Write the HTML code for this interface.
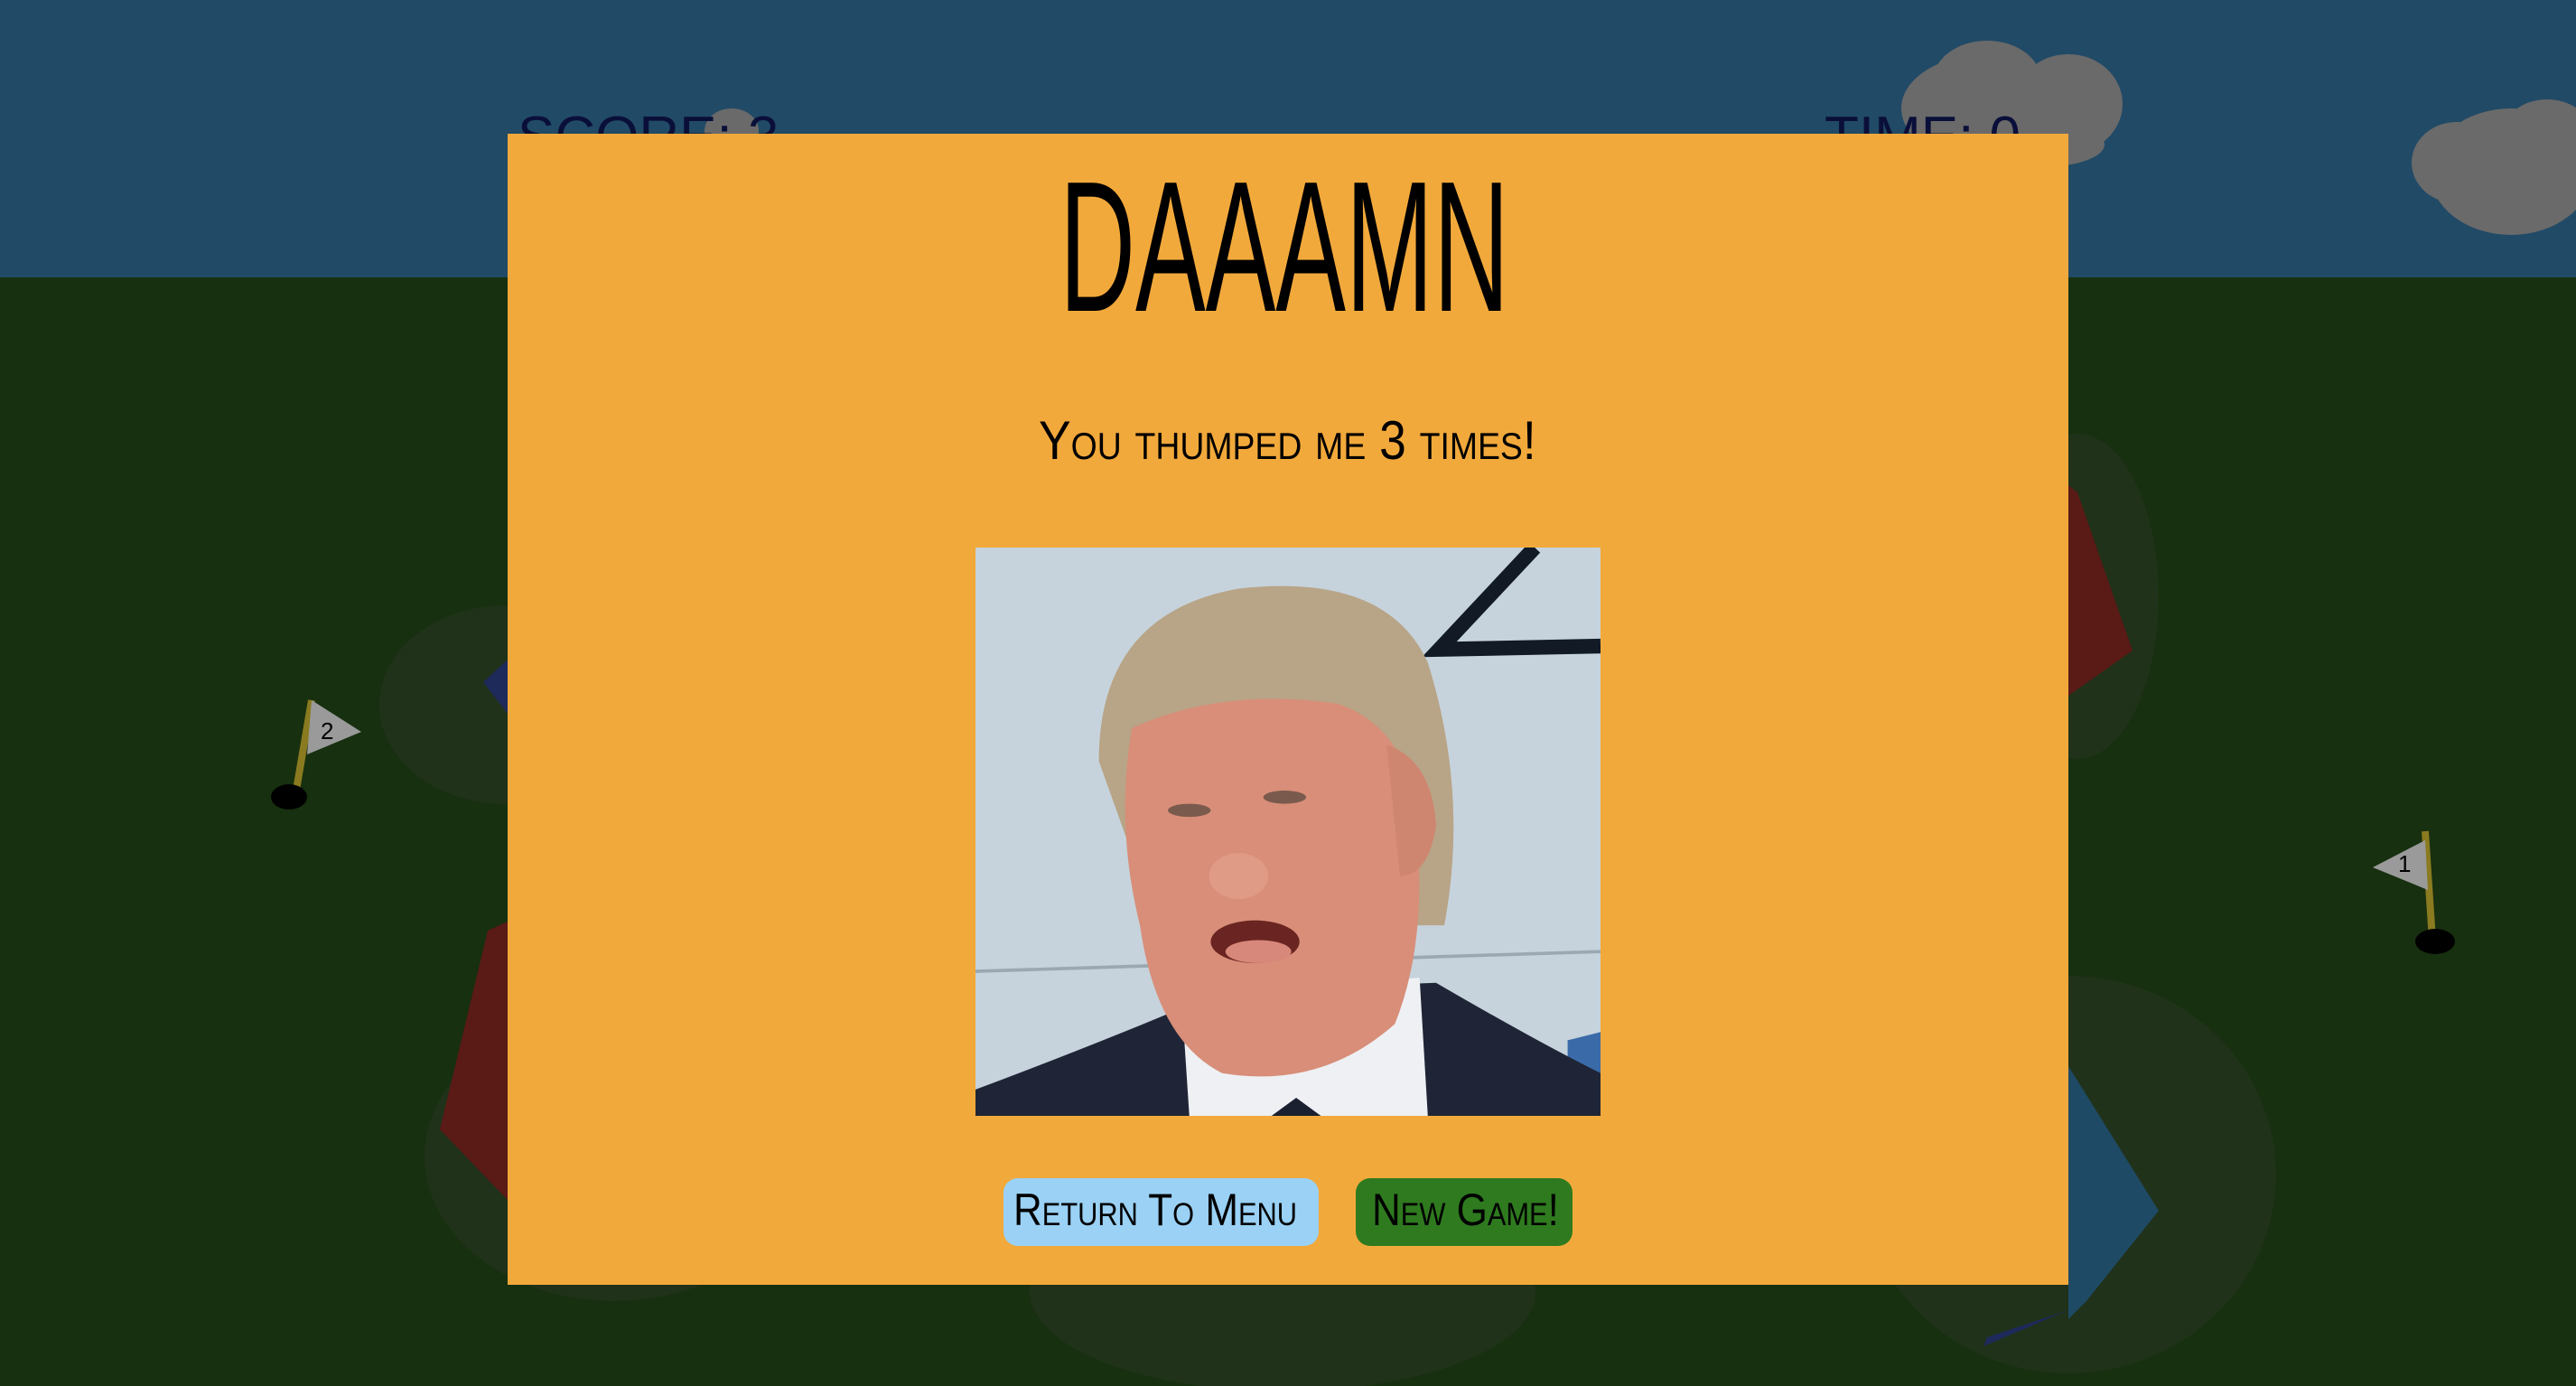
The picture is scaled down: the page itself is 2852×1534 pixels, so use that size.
<!DOCTYPE html>
<html><head><meta charset="utf-8"><style>
*{margin:0;padding:0;box-sizing:border-box}
html,body{width:2852px;height:1534px;overflow:hidden;background:#17300f;font-family:"Liberation Sans",sans-serif}
.abs{position:absolute}
.t{position:absolute;white-space:nowrap;transform-origin:0 0;color:#000}
</style></head><body>
<div class="abs" style="left:0;top:0;width:2852px;height:307px;background:#214a66"></div>
<svg class="abs" style="left:0;top:0" width="2852" height="1534">
 <g fill="#6a6a6a">
  <ellipse cx="2200" cy="120" rx="95" ry="60"/><ellipse cx="2200" cy="90" rx="60" ry="45"/><ellipse cx="2290" cy="115" rx="60" ry="55"/><ellipse cx="2260" cy="160" rx="70" ry="25"/>
  <ellipse cx="2780" cy="190" rx="90" ry="70"/><ellipse cx="2720" cy="180" rx="50" ry="45"/><ellipse cx="2820" cy="150" rx="50" ry="40"/>
  <ellipse cx="810" cy="145" rx="30" ry="25"/>
 </g>
 <g fill="#203219">
  <ellipse cx="560" cy="780" rx="140" ry="110"/>
  <ellipse cx="2300" cy="660" rx="90" ry="180"/>
  <ellipse cx="680" cy="1280" rx="210" ry="160"/>
  <ellipse cx="2290" cy="1300" rx="230" ry="220"/>
  <ellipse cx="1420" cy="1430" rx="280" ry="110"/>
 </g>
 <polygon points="562,1020 540,1030 487,1250 562,1328" fill="#5a1a16"/>
 <polygon points="2290,537 2300,545 2361,720 2290,770" fill="#5a1a16"/>
 <polygon points="2290,1180 2390,1340 2310,1440 2290,1460" fill="#1f4a66"/>
 <polygon points="2290,1450 2200,1480 2196,1490" fill="#1e2a5a"/>
 <polygon points="562,730 535,755 562,790" fill="#1e2a5a"/>
 <g><line x1="345" y1="775" x2="325" y2="892" stroke="#8a7a20" stroke-width="8"/>
  <polygon points="345,775 400,810 340,835" fill="#9a9a9a"/><ellipse cx="320" cy="882" rx="20" ry="14" fill="#000"/>
  <text x="355" y="818" font-size="26" font-family="Liberation Sans">2</text></g>
 <g><line x1="2685" y1="920" x2="2693" y2="1040" stroke="#8a7a20" stroke-width="8"/>
  <polygon points="2685,930 2627,960 2688,985" fill="#9a9a9a"/><ellipse cx="2696" cy="1042" rx="22" ry="14" fill="#000"/>
  <text x="2655" y="965" font-size="26" font-family="Liberation Sans">1</text></g>
 <text x="573" y="172" font-size="62" fill="#0a0f3a" font-family="Liberation Sans">SCORE: 3</text>
 <text x="2020" y="172" font-size="62" fill="#0a0f3a" font-family="Liberation Sans">TIME: 0</text>
</svg>
<div class="abs" style="left:562px;top:148px;width:1728px;height:1274px;background:#f2a93b"></div>
<div class="t" style="left:1173px;top:170px;font-size:206px;line-height:1;transform:scaleX(0.565)">DAAAMN</div>
<div class="t" style="left:1150px;top:458px;font-size:60px;line-height:1;font-variant:small-caps;transform:scaleX(0.89)">You thumped me 3 times!</div>
<svg class="abs" style="left:1080px;top:606px" width="692" height="629" viewBox="0 0 380 346" preserveAspectRatio="none">
 <rect width="380" height="346" fill="#c6d3dc"/>
 <line x1="0" y1="258" x2="380" y2="246" stroke="#9aa8b2" stroke-width="2"/>
 <polygon points="360,300 380,295 380,346 360,346" fill="#3b6aa8"/>
 <path d="M340 0 L282 62 L380 60" fill="none" stroke="#111a25" stroke-width="9"/>
 <path d="M0 330 Q80 300 150 270 L280 265 Q340 300 380 320 L380 346 L0 346Z" fill="#1f2536"/>
 <path d="M125 270 L270 262 L275 346 L130 346Z" fill="#eef0f4"/>
 <polygon points="180,346 195,335 210,346" fill="#1a2030"/>
 <path d="M75 130 Q75 40 160 25 Q250 15 275 70 Q300 150 285 230 L255 230 L100 200 Z" fill="#b8a487"/>
 <path d="M95 110 Q150 85 220 95 Q265 110 268 170 Q275 240 255 290 Q210 330 150 320 Q110 300 100 230 Q85 170 95 110Z" fill="#d88e78"/>
 <path d="M250 120 Q278 130 280 170 Q275 200 258 200Z" fill="#cf8670"/>
 <ellipse cx="170" cy="240" rx="27" ry="13" fill="#6a2522"/>
 <ellipse cx="172" cy="246" rx="20" ry="7" fill="#d7887a"/>
 <ellipse cx="130" cy="160" rx="13" ry="4" fill="#7a5a4c"/>
 <ellipse cx="188" cy="152" rx="13" ry="4" fill="#7a5a4c"/>
 <ellipse cx="160" cy="200" rx="18" ry="14" fill="#e09b86"/>
</svg>
<div class="abs" style="left:1111px;top:1304px;width:349px;height:75px;background:#9ad1f5;border-radius:16px"></div>
<div class="t" style="left:1122px;top:1312px;font-size:50px;line-height:1.1;font-variant:small-caps;transform:scaleX(0.88)">Return To Menu</div>
<div class="abs" style="left:1501px;top:1304px;width:240px;height:75px;background:#2f7a1f;border-radius:16px"></div>
<div class="t" style="left:1519px;top:1312px;font-size:50px;line-height:1.1;font-variant:small-caps;transform:scaleX(0.88)">New Game!</div>
</body></html>
